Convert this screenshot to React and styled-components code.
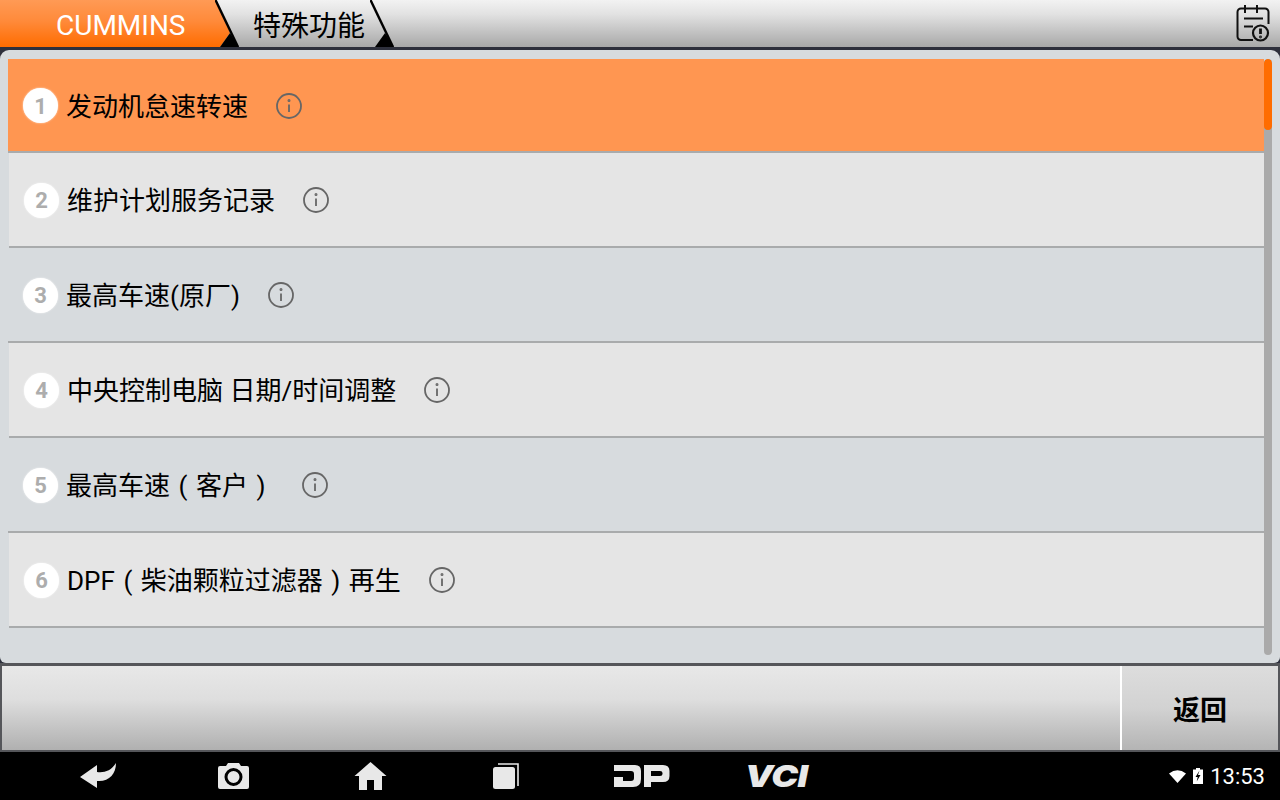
import React from "react";
import styled, { createGlobalStyle } from "styled-components";

const GlobalStyle = createGlobalStyle`
  html, body {
    margin: 0;
    padding: 0;
    background: #000;
  }
  * {
    box-sizing: border-box;
  }
`;

const FONT = `Roboto, "Noto Sans CJK SC", sans-serif`;

const Screen = styled.div`
  width: 1280px;
  height: 800px;
  display: flex;
  flex-direction: column;
  overflow: hidden;
  background: #2e303c;
  font-family: ${FONT};
`;

const Header = styled.header`
  height: 47px;
  flex: none;
  display: flex;
  align-items: stretch;
  background: linear-gradient(#f2f2f2, #e2e2e2 30%, #a8a8a8);
`;

const Tab = styled.div`
  display: flex;
  align-items: center;
  height: 47px;
  width: ${(props) => props.$width}px;
  padding-left: ${(props) => props.$pad}px;
  padding-top: ${(props) => (props.$active ? 3 : 1)}px;
  font-size: 28px;
  color: ${(props) => (props.$active ? "#fff" : "#000")};
  background: ${(props) =>
    props.$active ? "linear-gradient(#ff9a55, #ff8a3a 45%, #ff6c00)" : "none"};
`;

const Chevron = styled.svg`
  flex: none;
  width: 24px;
  height: 47px;
`;

const HeaderIcon = styled.svg`
  margin-left: auto;
  margin-right: 9px;
  margin-top: 4px;
  width: 36px;
  height: 38px;
`;

const Panel = styled.main`
  height: 613px;
  margin-top: 3px;
  flex: none;
  display: flex;
  padding: 9px 8px 8px 8px;
  background: #d7dbde;
  border-radius: 9px 9px 6px 6px;
`;

const List = styled.div`
  flex: 1;
  min-width: 0;
`;

const Row = styled.div`
  height: 95px;
  display: flex;
  align-items: center;
  margin-left: ${(props) => (props.$even ? 1 : 0)}px;
  padding-left: 15px;
  padding-top: 1px;
  background: ${(props) => props.$bg};
  border-bottom: 2px solid #a9abac;
  &:first-child {
    height: 94px;
  }
`;

const Badge = styled.span`
  width: 35px;
  height: 35px;
  flex: none;
  display: flex;
  align-items: center;
  justify-content: center;
  padding-top: 1px;
  border-radius: 50%;
  background: #fff;
  box-shadow: 0 0 2px rgba(255, 255, 255, 0.8);
  color: #adadad;
  font: 700 22px Roboto, sans-serif;
`;

const Label = styled.span`
  margin-left: 8px;
  margin-top: 2px;
  font-size: 26px;
  line-height: 32px;
  color: #000;
  white-space: pre;
`;

const Paren = styled.span`
  display: inline-block;
  width: 26px;
  text-align: center;
`;

const InfoIcon = styled.svg`
  flex: none;
  width: 28px;
  height: 28px;
  margin-left: 27px;
`;

const Track = styled.div`
  flex: none;
  width: 8px;
  height: 596px;
  background: #aaa;
  border-radius: 4px;
  overflow: hidden;
`;

const Thumb = styled.div`
  height: 71px;
  background: #ff6c00;
  border-radius: 4px;
`;

const ActionBar = styled.div`
  height: 89px;
  flex: none;
  display: flex;
  padding: 3px 2px 2px 2px;
  background: #55565a;
`;

const BarFill = styled.div`
  flex: 1;
  background: linear-gradient(#e8e8e8, #dedede 40%, #b0b0b0);
`;

const BackButton = styled.button`
  width: 158px;
  border: 0;
  border-left: 2px solid #fff;
  padding: 0;
  background: linear-gradient(#dddddd, #d2d2d2 50%, #b4b4b4);
  color: #000;
  font-family: ${FONT};
  font-size: 27px;
  font-weight: 700;
`;

const NavBar = styled.footer`
  height: 48px;
  flex: none;
  display: flex;
  align-items: center;
  background: #000;
  color: #e8e8e8;
`;

const NavSlot = styled.div`
  width: ${(props) => props.$width}px;
  padding-left: ${(props) => props.$pad || 0}px;
  flex: none;
  display: flex;
  justify-content: center;
`;

const VciMark = styled.span`
  display: inline-block;
  margin-left: -4px;
  font: italic 900 30px/30px Inter, sans-serif;
  letter-spacing: -0.5px;
  color: #e8e8e8;
  transform: scaleX(1.2);
`;

const Status = styled.div`
  margin-left: auto;
  margin-right: 15px;
  display: flex;
  align-items: center;
  gap: 7px;
  color: #fff;
  font-size: 22px;
`;

const rows = [
  { text: "发动机怠速转速", bg: "#ff9651" },
  { text: "维护计划服务记录", bg: "#e5e5e5" },
  { text: "最高车速(原厂)", bg: "#d7dbde" },
  { text: "中央控制电脑 日期/时间调整", bg: "#e5e5e5" },
  { text: ["最高车速", "(", "客户", ")"], bg: "#d7dbde" },
  { text: ["DPF", "(", "柴油颗粒过滤器", ")", "再生"], bg: "#e5e5e5" },
];

// the device draws full width brackets with the glyph centred in the cell
const renderLabel = (text) =>
  Array.isArray(text)
    ? text.map((part, i) =>
        part === "(" || part === ")" ? <Paren key={i}>{part}</Paren> : part
      )
    : text;

const Info = () => (
  <InfoIcon viewBox="0 0 28 28" fill="none" stroke="#666" strokeWidth="1.8">
    <circle cx="14" cy="14" r="12" />
    <path d="M14 12.5V20" />
    <circle cx="14" cy="8.5" r="0.6" />
  </InfoIcon>
);

const App = () => (
  <Screen>
    <GlobalStyle />
    <Header>
      <Tab $active $width={215} $pad={56}>
        CUMMINS
      </Tab>
      <Chevron viewBox="0 0 24 47">
        <defs>
          <linearGradient id="tabFill" x1="0" y1="0" x2="0" y2="1">
            <stop offset="0" stopColor="#ff9a55" />
            <stop offset="0.45" stopColor="#ff8a3a" />
            <stop offset="1" stopColor="#ff6c00" />
          </linearGradient>
        </defs>
        <polygon points="0,0 1,0 15,33 5,47 0,47" fill="url(#tabFill)" />
        <polygon points="15,33 24,47 5,47" fill="#000" />
        <path d="M0.5 0L23 47" stroke="#000" strokeWidth="2.4" />
      </Chevron>
      <Tab $width={131} $pad={14}>
        特殊功能
      </Tab>
      <Chevron viewBox="0 0 24 47">
        <polygon points="15,33 24,47 5,47" fill="#000" />
        <path d="M0.5 0L23 47" stroke="#000" strokeWidth="2.4" />
      </Chevron>
      <HeaderIcon viewBox="0 0 36 38" fill="none" stroke="#111" strokeWidth="2">
        <path d="M18 36H6a3.500 3.500 0 0 1-3.500-3.500V8A3.500 3.500 0 0 1 6 4.500h24A3.500 3.500 0 0 1 33.500 8v12" />
        <path d="M10 1v8M22 1v8M9 14.500h19M9 22.500h9" />
        <circle cx="25.500" cy="29" r="7.500" strokeWidth="2.200" />
        <path d="M25.500 24.500v5.500" strokeWidth="2.800" />
        <circle cx="25.500" cy="33" r="0.500" strokeWidth="1.800" />
      </HeaderIcon>
    </Header>
    <Panel>
      <List>
        {rows.map((row, i) => (
          <Row key={i} $bg={row.bg} $even={i % 2 === 1}>
            <Badge>{i + 1}</Badge>
            <Label>{renderLabel(row.text)}</Label>
            <Info />
          </Row>
        ))}
      </List>
      <Track>
        <Thumb />
      </Track>
    </Panel>
    <ActionBar>
      <BarFill />
      <BackButton>返回</BackButton>
    </ActionBar>
    <NavBar>
      <NavSlot $width={165} $pad={33}>
        <svg width="38" height="28" viewBox="0 0 38 28" fill="#e8e8e8">
          <path d="M0 15L17 3v7c7 1 14-1 19-9 0 11-7 19-19 18v7z" />
        </svg>
      </NavSlot>
      <NavSlot $width={137}>
        <svg width="33" height="28" viewBox="0 0 33 28">
          <path
            d="M3 4h6l2-3h11l2 3h6a2 2 0 0 1 2 2v19a2 2 0 0 1-2 2H3a2 2 0 0 1-2-2V6a2 2 0 0 1 2-2z"
            fill="#e8e8e8"
          />
          <circle cx="16.500" cy="15" r="7.500" fill="none" stroke="#000" strokeWidth="3" />
        </svg>
      </NavSlot>
      <NavSlot $width={136}>
        <svg width="33" height="30" viewBox="0 0 33 30" fill="#e8e8e8">
          <path d="M16.500 1L32.500 15H28V29H20V19H13V29H5V15H0.500z" />
        </svg>
      </NavSlot>
      <NavSlot $width={136}>
        <svg width="28" height="28" viewBox="0 0 28 28">
          <rect x="1" y="5" width="22" height="22" rx="2.500" fill="#e8e8e8" />
          <path d="M6 2H26V24" fill="none" stroke="#e8e8e8" strokeWidth="1.600" />
        </svg>
      </NavSlot>
      <NavSlot $width={136}>
        <svg width="56" height="22" viewBox="0 0 56 22" fill="#e8e8e8" fillRule="evenodd">
          <path d="M0 0H21Q27 0 27 6V14Q27 22 19 22H0V12H9V16H17Q20 16 20 13V9Q20 6 17 6H0z" />
          <path d="M30 22V0H49Q55.500 0 55.500 6V11Q55.500 17 49 17H37V22zM37 6V11H46Q48.500 11 48.500 9V8Q48.500 6 46 6z" />
        </svg>
      </NavSlot>
      <NavSlot $width={137}>
        <VciMark>VCI</VciMark>
      </NavSlot>
      <Status>
        <svg width="17" height="13" viewBox="0 0 17 13" fill="#fff">
          <path d="M0 3.500Q8.500-3 17 3.500L8.500 13z" />
        </svg>
        <svg width="10" height="16" viewBox="0 0 10 16">
          <path d="M3 0h4v1.500h3V16H0V1.500h3z" fill="#fff" />
          <path d="M6.500 2.500L2.500 9h2.200l-1 4.500 3.800-6.500H5z" fill="#000" />
        </svg>
        <span>13:53</span>
      </Status>
    </NavBar>
  </Screen>
);

export default App;
